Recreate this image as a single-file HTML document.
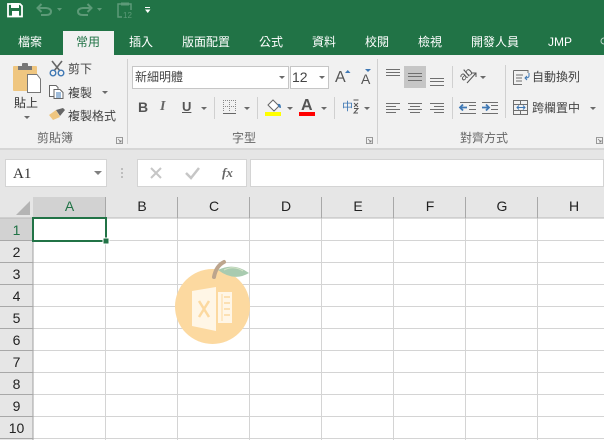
<!DOCTYPE html>
<html><head><meta charset="utf-8"><style>
*{margin:0;padding:0;box-sizing:border-box}
html,body{width:604px;height:440px;overflow:hidden;background:#fff}
body{position:relative;font-family:"Liberation Sans","Noto Sans CJK TC",sans-serif;font-size:12px;color:#444}
.a{position:absolute;white-space:nowrap}
.t{position:absolute;top:34px;font-size:12px;line-height:17px;color:#fff;white-space:nowrap}
.tri{position:absolute;width:0;height:0;border-left:3px solid transparent;border-right:3px solid transparent;border-top:3px solid #6a6a6a}
.sep{position:absolute;width:1px;background:#d0d0d0}
.g{position:absolute;font-size:12px;line-height:16px;color:#666;white-space:nowrap}
.ch{position:absolute;top:196px;height:22px;line-height:20px;text-align:center;font-size:14px;color:#222;font-family:"Liberation Sans",sans-serif}
.rh{position:absolute;left:0;width:33px;height:22px;line-height:25px;text-align:center;font-size:14px;color:#222;font-family:"Liberation Sans",sans-serif}
svg{position:absolute;left:0;top:0}
</style></head><body>
<div class="a" style="left:0;top:0;width:604px;height:55px;background:#217346"></div>
<div class="a" style="left:63px;top:31px;width:51px;height:24px;background:#f1f1f1"></div>
<div class="t" style="left:18px">檔案</div>
<div class="t" style="left:76px;color:#217346">常用</div>
<div class="t" style="left:129px">插入</div>
<div class="t" style="left:182px">版面配置</div>
<div class="t" style="left:259px">公式</div>
<div class="t" style="left:312px">資料</div>
<div class="t" style="left:365px">校閱</div>
<div class="t" style="left:418px">檢視</div>
<div class="t" style="left:471px">開發人員</div>
<div class="t" style="left:548px">JMP</div>
<div class="a" style="left:0;top:55px;width:604px;height:93px;background:#f1f1f1"></div>
<div class="a" style="left:0;top:148px;width:604px;height:2px;background:#d6d6d6"></div>
<div class="a" style="left:0;top:150px;width:604px;height:46px;background:#e6e6e6"></div>
<div class="a" style="left:0;top:196px;width:604px;height:244px;background:#fff"></div>

<div class="a" style="left:14px;top:95px;font-size:12px;line-height:16px;color:#333">貼上</div>
<div class="tri" style="left:24px;top:116px"></div>
<div class="a" style="left:68px;top:61px;line-height:16px;color:#444">剪下</div>
<div class="a" style="left:68px;top:85px;line-height:16px;color:#444">複製</div>
<div class="tri" style="left:102px;top:91px"></div>
<div class="a" style="left:68px;top:108px;line-height:16px;color:#444">複製格式</div>
<div class="g" style="left:37px;top:130px">剪貼簿</div>
<div class="sep" style="left:127px;top:59px;height:85px"></div>

<div class="a" style="left:132px;top:66px;width:157px;height:23px;background:#fff;border:1px solid #c6c6c6"></div>
<div class="a" style="left:135px;top:69px;line-height:16px;color:#444">新細明體</div>
<div class="tri" style="left:279px;top:76px"></div>
<div class="a" style="left:290px;top:66px;width:39px;height:23px;background:#fff;border:1px solid #c6c6c6"></div>
<div class="a" style="left:292px;top:69px;line-height:16px;font-size:14px;color:#444">12</div>
<div class="tri" style="left:319px;top:76px"></div>
<div class="a" style="left:335px;top:69px;font-size:16px;line-height:18px;color:#555">A</div>
<div class="a" style="left:361px;top:71px;font-size:14px;line-height:16px;color:#555">A</div>
<div class="a" style="left:138px;top:99px;font-weight:bold;font-size:14px;line-height:16px;color:#555">B</div>
<div class="a" style="left:160px;top:99px;font-style:italic;font-weight:bold;font-family:'Liberation Serif',serif;font-size:14px;line-height:16px;color:#666">I</div>
<div class="a" style="left:182px;top:99px;font-weight:bold;font-size:13px;line-height:16px;color:#555;text-decoration:underline">U</div>
<div class="tri" style="left:201px;top:107px"></div>
<div class="sep" style="left:214px;top:97px;height:22px"></div>
<div class="tri" style="left:244px;top:107px"></div>
<div class="sep" style="left:257px;top:97px;height:22px"></div>
<div class="tri" style="left:287px;top:107px"></div>
<div class="a" style="left:301px;top:97px;font-weight:bold;font-size:16px;line-height:17px;color:#555">A</div>
<div class="tri" style="left:321px;top:107px"></div>
<div class="sep" style="left:334px;top:97px;height:22px"></div>
<div class="a" style="left:342px;top:100px;font-size:11px;line-height:14px;color:#3f78b4">中</div>
<div class="tri" style="left:364px;top:107px"></div>
<div class="g" style="left:232px;top:130px">字型</div>
<div class="sep" style="left:377px;top:59px;height:85px"></div>

<div class="a" style="left:404px;top:66px;width:22px;height:22px;background:#c6c6c6"></div>
<div class="sep" style="left:452px;top:66px;height:22px"></div>
<div class="sep" style="left:452px;top:97px;height:22px"></div>
<div class="a" style="left:459px;top:67px;font-size:12px;line-height:14px;color:#555;transform:rotate(-40deg)">ab</div>
<div class="tri" style="left:480px;top:76px"></div>
<div class="sep" style="left:505px;top:65px;height:53px"></div>
<div class="a" style="left:532px;top:69px;line-height:16px;color:#444">自動換列</div>
<div class="a" style="left:532px;top:100px;line-height:16px;color:#444">跨欄置中</div>
<div class="tri" style="left:590px;top:107px"></div>
<div class="g" style="left:460px;top:130px">對齊方式</div>

<div class="a" style="left:5px;top:159px;width:102px;height:28px;background:#fff;border:1px solid #d4d4d4"></div>
<div class="a" style="left:13px;top:165px;font-family:'Liberation Serif','Noto Serif CJK SC',serif;font-size:15px;line-height:18px;color:#333">A1</div>
<div class="tri" style="left:94px;top:171px;border-left-width:4px;border-right-width:4px;border-top-width:4px;border-top-color:#808080"></div>
<div class="a" style="left:137px;top:159px;width:110px;height:28px;background:#fff;border:1px solid #d4d4d4"></div>
<div class="a" style="left:250px;top:159px;width:354px;height:28px;background:#fff;border:1px solid #d4d4d4"></div>
<div class="a" style="left:222px;top:164px;font-family:'Liberation Serif',serif;font-style:italic;font-weight:bold;font-size:13px;line-height:17px;color:#666">fx</div>

<div class="a" style="left:0;top:196px;width:604px;height:22px;background:#e6e6e6"></div>
<div class="a" style="left:0;top:218px;width:33px;height:222px;background:#e6e6e6"></div>
<div class="a" style="left:33px;top:197px;width:73px;height:21px;background:#d2d2d2"></div>
<div class="a" style="left:0;top:218px;width:33px;height:22px;background:#d2d2d2"></div>
<div class="ch" style="left:33px;width:73px;color:#217346">A</div>
<div class="ch" style="left:106px;width:72px">B</div>
<div class="ch" style="left:178px;width:72px">C</div>
<div class="ch" style="left:250px;width:72px">D</div>
<div class="ch" style="left:322px;width:72px">E</div>
<div class="ch" style="left:394px;width:72px">F</div>
<div class="ch" style="left:466px;width:72px">G</div>
<div class="ch" style="left:538px;width:72px">H</div>
<div class="rh" style="top:218px;color:#217346">1</div>
<div class="rh" style="top:240px">2</div>
<div class="rh" style="top:262px">3</div>
<div class="rh" style="top:284px">4</div>
<div class="rh" style="top:306px">5</div>
<div class="rh" style="top:328px">6</div>
<div class="rh" style="top:350px">7</div>
<div class="rh" style="top:372px">8</div>
<div class="rh" style="top:394px">9</div>
<div class="rh" style="top:416px">10</div>

<svg width="604" height="440" viewBox="0 0 604 440" fill="none">
<!-- grid -->
<g stroke="#d4d4d4" stroke-width="1">
<path d="M33 240.500H604M33 262.500H604M33 284.500H604M33 306.500H604M33 328.500H604M33 350.500H604M33 372.500H604M33 394.500H604M33 416.500H604M33 438.500H604"/>
<path d="M105.500 218V440M177.500 218V440M249.500 218V440M321.500 218V440M393.500 218V440M465.500 218V440M537.500 218V440"/>
</g>
<g stroke="#a8a8a8" stroke-width="1">
<path d="M0 218H604" stroke="#b8b8b8"/>
<path d="M33 218V440" stroke="#a0a0a0"/>
<path d="M0 240.500H33M0 262.500H33M0 284.500H33M0 306.500H33M0 328.500H33M0 350.500H33M0 372.500H33M0 394.500H33M0 416.500H33M0 438.500H33"/>
<path d="M105.500 197V218M177.500 197V218M249.500 197V218M321.500 197V218M393.500 197V218M465.500 197V218M537.500 197V218"/>
</g>
<path d="M30 201V215H16Z" fill="#b4b4b4"/>
<!-- selection -->
<rect x="33" y="218" width="73" height="23" stroke="#217346" stroke-width="2"/>
<rect x="103" y="238" width="6" height="6" fill="#217346" stroke="#fff"/>
<!-- logo -->
<circle cx="212.500" cy="306.500" r="37.500" fill="#fcd9a0"/>
<path d="M214 277Q216 266 224 262" stroke="#bda58d" stroke-width="4" stroke-linecap="round"/>
<path d="M218 270Q234 262 249 273Q234 282 218 270Z" fill="#a9cbb0"/>
<path d="M224 270Q234 265 243 271" stroke="#d6e4c8" stroke-width="1"/>
<path d="M192 291L216 287V331L192 326Z" fill="#fff6e6"/>
<path d="M218 292H232V323H218Z" fill="#fff6e6"/>
<path d="M222 294V321" stroke="#fcd9a0" stroke-width="1"/>
<path d="M224 297H230M224 303H230M224 309H230M224 315H230" stroke="#fcd9a0" stroke-width="1.500"/>
<path d="M199 301L209 317M209 301L199 317" stroke="#fcd9a0" stroke-width="2.500"/>
<!-- QAT save -->
<path d="M8 4H20L22 6V16.500H8Z" stroke="#fff" stroke-width="1.800" fill="none"/>
<rect x="11" y="3" width="8" height="5" fill="#fff"/>
<rect x="12" y="11" width="7" height="5" fill="#fff"/>
<!-- undo redo -->
<g stroke="#5d9a78" stroke-width="2" fill="none">
<path d="M38 8H46Q51 8.500 51 11.500Q51 15 46 15H41"/>
<path d="M41.500 4L37.500 8L41.500 12"/>
<path d="M91 8H83Q78 8.500 78 11.500Q78 15 83 15H88"/>
<path d="M87.500 4L91.500 8L87.500 12"/>
<path d="M122 4H118V17H122M128 4H131V10" stroke-width="1.500"/>
<rect x="121" y="2.500" width="8" height="3" fill="#5d9a78" stroke="none"/>
</g>
<path d="M57 8H62L59.500 11ZM97 8H102L99.500 11Z" fill="#5d9a78"/>
<text x="123" y="18" font-family="Liberation Sans" font-size="8" fill="#5d9a78">12</text>
<path d="M145 7.500H150" stroke="#fff"/>
<path d="M145 9.500H150.500L147.750 13Z" fill="#fff"/>
<!-- paste -->
<rect x="13" y="66" width="24" height="25" rx="1" fill="#efc680"/>
<rect x="22" y="63" width="6" height="4" rx="1" fill="#777"/>
<rect x="18" y="66" width="14" height="4" fill="#777"/>
<path d="M27.500 74.500H37L40.500 79V92.500H27.500Z" fill="#fff" stroke="#777"/>
<!-- cut -->
<path d="M52 61L60 71M62 61L54 71" stroke="#666" stroke-width="1.600"/>
<circle cx="53" cy="73" r="2.800" stroke="#3f78b4" stroke-width="1.400"/>
<circle cx="61" cy="73" r="2.800" stroke="#3f78b4" stroke-width="1.400"/>
<!-- copy -->
<path d="M49.500 85.500H56L58 87.500V96.500H49.500Z" stroke="#666" fill="#fff"/>
<path d="M54 89.500H60L63 92.500V98.500H54Z" stroke="#666" fill="#fff"/>
<path d="M56 93H61M56 95H61M56 97H61" stroke="#3f78b4"/>
<!-- format painter -->
<path d="M49 115L56 110L60 117L53 120Z" fill="#efc680"/>
<path d="M56 110L60 116L65 110L63 108Z" fill="#666"/>
<!-- dialog launchers -->
<path d="M116.500 137.500H122.500V143.500H116.500Z M118 139L121 142M121 140V142H119" stroke="#808080" stroke-width=".8"/>
<path d="M366.500 137.500H372.500V143.500H366.500Z M368 139L371 142M371 140V142H369" stroke="#808080" stroke-width=".8"/>
<path d="M596.500 137.500H602.500V143.500H596.500Z M598 139L601 142M601 140V142H599" stroke="#808080" stroke-width=".8"/>
<!-- font grow/shrink carets -->
<path d="M345 73H350.500L347.750 70Z" fill="#3f78b4"/>
<path d="M365 69H371L368 72Z" fill="#3f78b4"/>
<!-- borders -->
<path d="M223 100.500H235M223 106.500H235M223.500 100V112M229.500 100V112M235.500 100V112" stroke="#888" stroke-dasharray="1 1"/>
<path d="M223 113.500H236" stroke="#666"/>
<!-- fill color -->
<path d="M268 105L273 100L279 106L274 111Z" stroke="#666" fill="#fff"/>
<path d="M278 104Q281 103 281 108Q278 108 278 104Z" fill="#3f78b4"/>
<rect x="265" y="112" width="16" height="4" fill="#ff0"/>
<rect x="299" y="112" width="16" height="4" fill="#f00"/>
<!-- phonetic -->
<path d="M353.500 100H358.500M354 103L358 107M358 103L354 107M354 108.500H358L354 113H358" stroke="#555" stroke-width="1"/>
<!-- alignment -->
<g stroke="#6f6f6f" stroke-width="1">
<path d="M386 69.500H400M386 72.500H400M386 75.500H400"/>
<path d="M408 73.500H422M408 76.500H422M408 80.500H422"/>
<path d="M430 78.500H444M430 81.500H444M430 85.500H444"/>
<path d="M386 103.500H400M386 106.500H396M386 109.500H400M386 112.500H396"/>
<path d="M408 103.500H422M410 106.500H420M408 109.500H422M410 112.500H420"/>
<path d="M430 103.500H444M434 106.500H444M430 109.500H444M434 112.500H444"/>
<path d="M460 102.500H476M469 105.500H476M469 109.500H476M460 113.500H476"/>
<path d="M482 102.500H498M491 105.500H498M491 109.500H498M482 113.500H498"/>
<path d="M513.500 70.500H528V73M513.500 70.500V84.500H522M516 75H523M516 78H522M516 81H522"/>
<rect x="513.500" y="100.500" width="14" height="14"/>
<path d="M514 104.500H527M514 110.500H527M520.500 101V104M520.500 111V114"/>
</g>
<path d="M467 83L476 73M472 73H476V77" stroke="#555"/>
<path d="M460 107.500H467M463 104.500L460 107.500L463 110.500" stroke="#3f78b4" stroke-width="1.800"/>
<path d="M482 107.500H489M486 104.500L489 107.500L486 110.500" stroke="#3f78b4" stroke-width="1.800"/>
<path d="M517 107.500H525M519 105.500L517 107.500L519 109.500M523 105.500L525 107.500L523 109.500" stroke="#3f78b4"/>
<path d="M529 73V76Q529 78 525 78M527 76L525 78L527 80" stroke="#3f78b4"/>
<!-- overflow tab glyph -->
<circle cx="604" cy="41" r="3" stroke="#fff" opacity=".7"/>
<!-- formula bar -->
<path d="M151 168L161 178M161 168L151 178" stroke="#c6c6c6" stroke-width="2"/>
<path d="M186 173L191 178L199 168" stroke="#c6c6c6" stroke-width="2.500"/>
<circle cx="122" cy="169" r="1" fill="#b0b0b0"/><circle cx="122" cy="173" r="1" fill="#b0b0b0"/><circle cx="122" cy="177" r="1" fill="#b0b0b0"/>
</svg>
</body></html>
